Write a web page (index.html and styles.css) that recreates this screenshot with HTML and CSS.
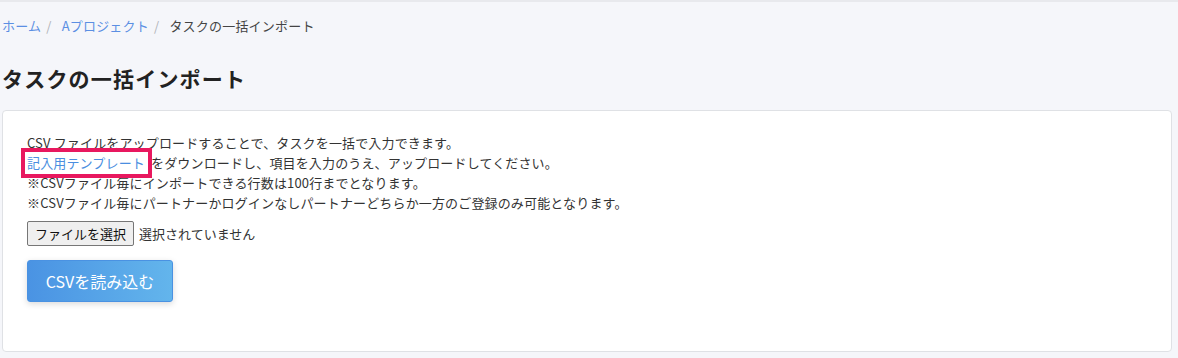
FILE: index.html
```html
<!DOCTYPE html>
<html lang="ja">
<head>
<meta charset="utf-8">
<link rel="stylesheet" href="styles.css">
</head>
<body>
<div class="topline"></div>
<main class="page">
  <nav class="crumbs">
    <a href="#">ホーム</a><span class="sep">/</span>
    <a href="#">Aプロジェクト</a><span class="sep">/</span>
    <span class="current">タスクの一括インポート</span>
  </nav>
  <h1 class="title">タスクの一括インポート</h1>
  <section class="card">
    <p class="desc">CSV ファイルをアップロードすることで、タスクを一括で入力できます。<br>
    <a class="tpl" href="#">記入用テンプレート</a> をダウンロードし、項目を入力のうえ、アップロードしてください。<br>
    ※CSVファイル毎にインポートできる行数は100行までとなります。<br>
    ※CSVファイル毎にパートナーかログインなしパートナーどちらか一方のご登録のみ可能となります。</p>
    <div class="file">
      <span class="file-btn">ファイルを選択</span><span class="file-name">選択されていません</span>
    </div>
    <button class="submit" type="button">CSVを読み込む</button>
  </section>
</main>
</body>
</html>
```
FILE: styles.css
```css
html, body {
  margin: 0;
  padding: 0;
}
body {
  background: #f5f6fa;
  font-family: "Noto Sans CJK JP", "Noto Sans", sans-serif;
  color: #333;
  font-size: 13px;
}
.topline {
  height: 2px;
  background: #e8e9ed;
}
.page {
  padding: 0 6px 0 2px;
}
.crumbs {
  height: 20px;
  line-height: 20px;
  padding: 14px 0 0 0;
  font-size: 13px;
  letter-spacing: 0.2px;
}
.crumbs a {
  color: #5b8fe3;
  text-decoration: none;
}
.crumbs .sep {
  color: #b0b3b8;
  margin: 0 7px 0 5px;
}
.crumbs .current {
  color: #444;
}
.title {
  margin: 0;
  padding: 26px 0 0 0;
  line-height: 32px;
  font-size: 21px;
  font-weight: bold;
  color: #222;
  letter-spacing: 1.2px;
}
.card {
  margin-top: 16px;
  background: #fff;
  border: 1px solid #dfe1e5;
  border-radius: 4px;
  height: 242px;
  box-sizing: border-box;
  padding: 22px 24px 0 24px;
}
.desc {
  margin: 0;
  line-height: 20px;
  font-size: 13px;
  letter-spacing: 0.15px;
  color: #333;
}
.tpl {
  color: #4a8ee0;
  text-decoration: none;
  padding: 1px 3px 2px 2px;
  margin-left: -2px;
  outline: 4px solid #e8185f;
}
.file {
  margin-top: 7px;
  display: flex;
  align-items: center;
  height: 26px;
}
.file-btn {
  display: inline-block;
  box-sizing: border-box;
  height: 25px;
  line-height: 23px;
  padding: 0 7px;
  border: 1px solid #767676;
  border-radius: 2px;
  background: #efefef;
  color: #111;
  font-size: 13px;
}
.file-name {
  margin-left: 5px;
  color: #333;
  font-size: 13px;
}
.submit {
  display: block;
  margin-top: 14px;
  width: 146px;
  height: 42px;
  border: 1px solid #4a92e2;
  border-radius: 3px;
  background: linear-gradient(90deg, #4a93e3, #63b5ec);
  color: #fff;
  font-family: "Noto Sans CJK JP", "Noto Sans", sans-serif;
  font-size: 16px;
  box-shadow: 0 2px 6px rgba(0, 0, 0, 0.15);
  padding: 0;
}
```
